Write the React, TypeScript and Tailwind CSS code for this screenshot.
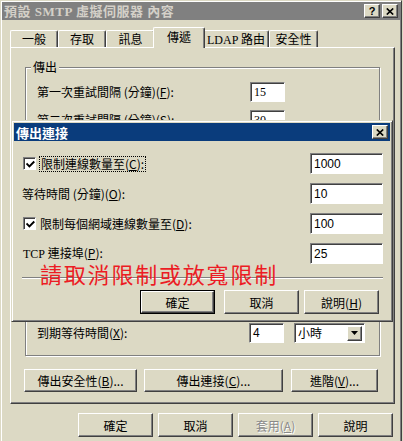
import React from "react";

const FONT = "font-['Noto_Sans_CJK_TC','Liberation_Sans',sans-serif]";
const SERIF = "font-['Liberation_Serif','Noto_Sans_CJK_TC',serif]";
const NUM = "font-['Liberation_Sans','Noto_Sans_CJK_TC',sans-serif]";

const raised =
  "border border-t-white border-l-white border-r-[#404040] border-b-[#404040] shadow-[inset_-1px_-1px_#808080]";
const sunken =
  "bg-white border border-t-[#808080] border-l-[#808080] border-r-white border-b-white shadow-[inset_1px_1px_#404040]";

function U({ children }: { children: React.ReactNode }) {
  return <span className="underline underline-offset-[1px]">{children}</span>;
}

function Btn({
  className = "",
  children,
  isDefault = false,
  disabled = false,
}: {
  className?: string;
  children: React.ReactNode;
  isDefault?: boolean;
  disabled?: boolean;
}) {
  const inner = (
    <div
      className={`${raised} h-full w-full flex items-center justify-center leading-none pt-[1px] ${
        disabled ? "text-[#8a8a8a] [text-shadow:1px_1px_0_#fff]" : ""
      }`}
    >
      {children}
    </div>
  );
  return <div className={`${className} shrink-0 ${isDefault ? "border border-black" : ""}`}>{inner}</div>;
}

function Field({ value, className = "", font = NUM }: { value: string; className?: string; font?: string }) {
  return (
    <div className={`${sunken} ${className} ${font} shrink-0 flex items-center pl-[3px] text-[12px] leading-none`}>
      {value}
    </div>
  );
}

function Check() {
  return (
    <div className={`${sunken} w-[13px] h-[13px] shrink-0 flex items-center justify-center`}>
      <svg width="9" height="9" viewBox="0 0 9 9" className="ml-[1px] mt-[1px]">
        <path d="M1.2 4.2 L3.4 6.4 L7.6 2.2" stroke="#000" strokeWidth="1.9" fill="none" strokeLinecap="square" />
      </svg>
    </div>
  );
}

function Tab({ label, className, selected = false }: { label: React.ReactNode; className: string; selected?: boolean }) {
  if (selected) {
    return (
      <div
        className={`${className} relative z-10 -mx-[2px] h-[21px] bg-[#dcd9c4] border-l border-t border-r border-l-white border-t-white border-r-[#404040] shadow-[inset_-1px_0_#808080] rounded-t-[2px] flex items-center justify-center pb-[2px]`}
      >
        {label}
      </div>
    );
  }
  return (
    <div
      className={`${className} mt-[3px] h-[17px] border-l border-t border-r border-l-white border-t-white border-r-[#404040] shadow-[inset_-1px_0_#808080] rounded-t-[2px] flex items-center justify-center`}
    >
      {label}
    </div>
  );
}

function XGlyph() {
  return (
    <svg width="8" height="7" viewBox="0 0 8 7">
      <path d="M0.8 0.5 L7.2 6.5 M7.2 0.5 L0.8 6.5" stroke="#000" strokeWidth="1.7" />
    </svg>
  );
}

export default function App() {
  return (
    <div className={`${FONT} text-[12px] text-black w-[403px] h-[441px] bg-[#dcd9c4] relative overflow-hidden`}>
      <div className="w-[402px] h-[441px] border-l border-t border-r border-l-[#dcd9c4] border-t-[#dcd9c4] border-r-[#404040] shadow-[inset_1px_1px_white,inset_-1px_0_#808080] p-[1px]">
        {/* title bar */}
        <div className="h-[18px] bg-[#808080] flex items-center justify-between pl-[2px] pr-[2px]">
          <div className={`${SERIF} font-bold text-[13px] text-[#d4d0c8] leading-none tracking-[0.5px]`}>
            預設 SMTP 虛擬伺服器 內容
          </div>
          <div className="flex gap-[2px]">
            <div className={`${raised} bg-[#dcd9c4] w-[16px] h-[14px] flex items-center justify-center`}>
              <span className="font-['Liberation_Sans',sans-serif] font-bold text-[11px] leading-none">?</span>
            </div>
            <div className={`${raised} bg-[#dcd9c4] w-[16px] h-[14px] flex items-center justify-center`}>
              <XGlyph />
            </div>
          </div>
        </div>

        {/* tabs */}
        <div className="mt-[7px] ml-[8px] h-[20px] flex items-start">
          <Tab className="w-[48px]" label="一般" />
          <Tab className="w-[48px]" label="存取" />
          <Tab className="w-[49px]" label="訊息" />
          <Tab className="w-[52px]" label="傳遞" selected />
          <Tab
            className="w-[66px]"
            label={
              <span>
                <span className={SERIF}>LDAP</span> 路由
              </span>
            }
          />
          <Tab className="w-[49px]" label="安全性" />
        </div>

        {/* tab panel */}
        <div className={`${raised} ml-[8px] w-[385px] h-[357px]`}>
          <div className="ml-[14px] mt-[19px] w-[355px] h-[289px] border border-[#808080] shadow-[inset_1px_1px_white,1px_1px_white] relative">
            <div className="absolute -top-[9px] left-[5px] px-[2px] bg-[#dcd9c4] leading-[16px]">傳出</div>
            <div className="flex flex-col">
              <div className="mt-[14px] flex items-center h-[20px]">
                <div className="w-[224px] pl-[11px] shrink-0">
                  第一次重試間隔 (分鐘)(<U>F</U>):
                </div>
                <Field value="15" className="w-[35px] h-[20px]" font={SERIF} />
              </div>
              <div className="mt-[8px] flex items-center h-[20px]">
                <div className="w-[224px] pl-[11px] shrink-0">
                  第二次重試間隔 (分鐘)(<U>S</U>):
                </div>
                <Field value="30" className="w-[35px] h-[20px]" font={SERIF} />
              </div>
              <div className="mt-[193px] flex items-center h-[20px]">
                <div className="w-[223px] pl-[11px] shrink-0">
                  到期等待時間(<U>X</U>):
                </div>
                <Field value="4" className="w-[35px] h-[20px]" />
                <div className={`${sunken} ml-[10px] w-[71px] h-[20px] flex items-center justify-between pl-[3px] pr-[2px]`}>
                  <span className="leading-none">小時</span>
                  <div className={`${raised} bg-[#dcd9c4] w-[15px] h-[15px] flex items-center justify-center`}>
                    <svg width="7" height="4" viewBox="0 0 7 4">
                      <path d="M0 0 H7 L3.5 4 Z" fill="#000" />
                    </svg>
                  </div>
                </div>
              </div>
            </div>
          </div>

          <div className="mt-[13px] ml-[13px] flex">
            <Btn className="w-[113px] h-[23px]">
              傳出安全性(<U>B</U>)...
            </Btn>
            <Btn className="ml-[7px] w-[139px] h-[23px]">
              傳出連接(<U>C</U>)...
            </Btn>
            <Btn className="ml-[8px] w-[87px] h-[23px]">
              進階(<U>V</U>)...
            </Btn>
          </div>
        </div>

        {/* bottom buttons */}
        <div className="mt-[9px] pl-[76px] flex gap-[5px]">
          <Btn className="w-[75px] h-[24px]">確定</Btn>
          <Btn className="w-[75px] h-[24px]">取消</Btn>
          <Btn className="w-[75px] h-[24px]" disabled>
            套用(<U>A</U>)
          </Btn>
          <Btn className="w-[75px] h-[24px]">說明</Btn>
        </div>
      </div>

      {/* overlay dialog */}
      <div className="absolute left-[11px] top-[120px] w-[382px] h-[202px] bg-[#dcd9c4] border border-t-[#dcd9c4] border-l-[#dcd9c4] border-r-[#404040] border-b-[#404040] shadow-[inset_1px_1px_white,inset_-1px_-1px_#808080] p-[2px]">
        <div className="h-[18px] bg-[#0a3c7c] flex items-center justify-between pl-[2px] pr-[2px]">
          <div className="font-bold text-white text-[13px] leading-none">傳出連接</div>
          <div className={`${raised} bg-[#dcd9c4] w-[16px] h-[14px] flex items-center justify-center`}>
            <XGlyph />
          </div>
        </div>

        <div className="mt-[12px] h-[21px] flex items-center justify-between pr-[7px]">
          <div className="flex items-center ml-[9px]">
            <Check />
            <div className="ml-[3px] border border-dotted border-black px-[1px] leading-[14px]">
              限制連線數量至(<U>C</U>):
            </div>
          </div>
          <Field value="1000" className="w-[73px] h-[21px]" />
        </div>

        <div className="mt-[9px] h-[21px] flex items-center justify-between pr-[7px]">
          <div className="ml-[8px]">
            等待時間 (分鐘)(<U>O</U>):
          </div>
          <Field value="10" className="w-[73px] h-[21px]" />
        </div>

        <div className="mt-[9px] h-[21px] flex items-center justify-between pr-[7px]">
          <div className="flex items-center ml-[9px]">
            <Check />
            <div className="ml-[4px] leading-[14px]">
              限制每個網域連線數量至(<U>D</U>):
            </div>
          </div>
          <Field value="100" className="w-[73px] h-[21px]" />
        </div>

        <div className="mt-[9px] h-[21px] flex items-center justify-between pr-[7px]">
          <div className="ml-[9px] leading-[14px]">
            <span className={SERIF}>TCP</span> 連接埠(<U>P</U>):
          </div>
          <Field value="25" className="w-[73px] h-[21px]" />
        </div>

        <div className="mt-[13px] ml-[8px] mr-[7px] h-[2px] border-t border-t-[#808080] border-b border-b-white" />

        <div className="mt-[11px] flex">
          <Btn className="ml-[126px] w-[75px] h-[24px]" isDefault>
            確定
          </Btn>
          <Btn className="ml-[9px] w-[75px] h-[24px]">取消</Btn>
          <Btn className="ml-[5px] w-[75px] h-[24px]">
            說明(<U>H</U>)
          </Btn>
        </div>

        <div className="absolute left-[28px] top-[141px] text-[22px] leading-none tracking-[1.8px] text-[#ec1c24] whitespace-nowrap">
          請取消限制或放寬限制
        </div>
      </div>
    </div>
  );
}
